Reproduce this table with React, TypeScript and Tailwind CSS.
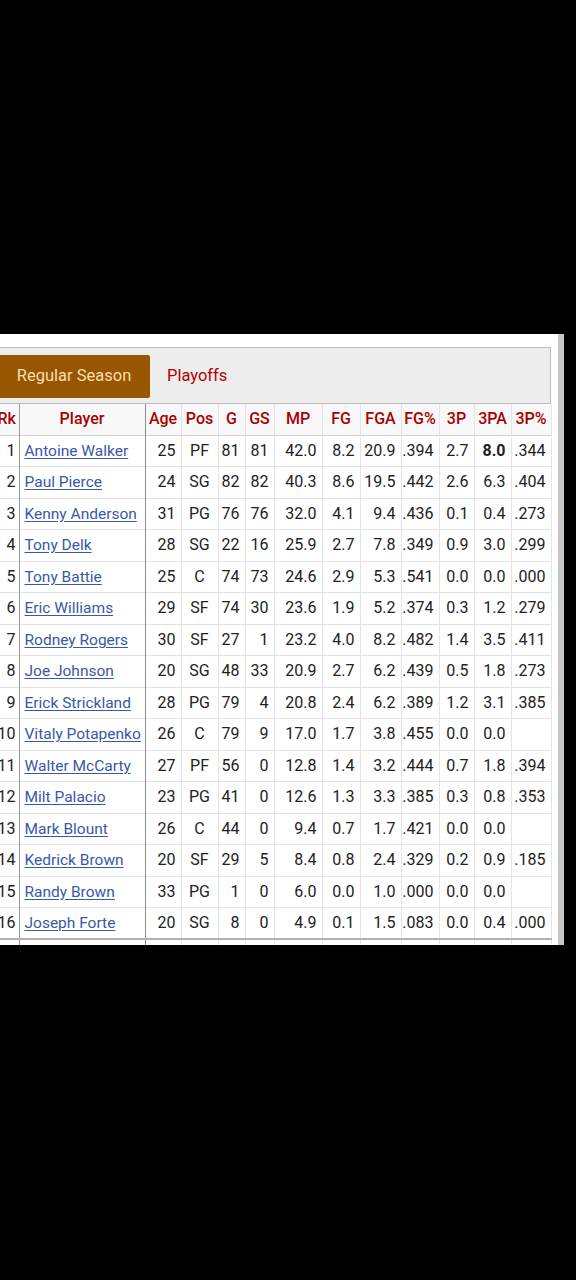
const cols = [
  { key: 'rk', label: 'Rk', w: 24 },
  { key: 'player', label: 'Player', w: 126 },
  { key: 'age', label: 'Age', w: 36 },
  { key: 'pos', label: 'Pos', w: 37 },
  { key: 'g', label: 'G', w: 27 },
  { key: 'gs', label: 'GS', w: 29 },
  { key: 'mp', label: 'MP', w: 48 },
  { key: 'fg', label: 'FG', w: 38 },
  { key: 'fga', label: 'FGA', w: 41 },
  { key: 'fgp', label: 'FG%', w: 38 },
  { key: 'tp', label: '3P', w: 35 },
  { key: 'tpa', label: '3PA', w: 37 },
  { key: 'tpp', label: '3P%', w: 40 },
]

// rk, player, age, pos, g, gs, mp, fg, fga, fg%, 3p, 3pa, 3p%
const rows: string[][] = [
  ['1', 'Antoine Walker', '25', 'PF', '81', '81', '42.0', '8.2', '20.9', '.394', '2.7', '8.0', '.344'],
  ['2', 'Paul Pierce', '24', 'SG', '82', '82', '40.3', '8.6', '19.5', '.442', '2.6', '6.3', '.404'],
  ['3', 'Kenny Anderson', '31', 'PG', '76', '76', '32.0', '4.1', '9.4', '.436', '0.1', '0.4', '.273'],
  ['4', 'Tony Delk', '28', 'SG', '22', '16', '25.9', '2.7', '7.8', '.349', '0.9', '3.0', '.299'],
  ['5', 'Tony Battie', '25', 'C', '74', '73', '24.6', '2.9', '5.3', '.541', '0.0', '0.0', '.000'],
  ['6', 'Eric Williams', '29', 'SF', '74', '30', '23.6', '1.9', '5.2', '.374', '0.3', '1.2', '.279'],
  ['7', 'Rodney Rogers', '30', 'SF', '27', '1', '23.2', '4.0', '8.2', '.482', '1.4', '3.5', '.411'],
  ['8', 'Joe Johnson', '20', 'SG', '48', '33', '20.9', '2.7', '6.2', '.439', '0.5', '1.8', '.273'],
  ['9', 'Erick Strickland', '28', 'PG', '79', '4', '20.8', '2.4', '6.2', '.389', '1.2', '3.1', '.385'],
  ['10', 'Vitaly Potapenko', '26', 'C', '79', '9', '17.0', '1.7', '3.8', '.455', '0.0', '0.0', ''],
  ['11', 'Walter McCarty', '27', 'PF', '56', '0', '12.8', '1.4', '3.2', '.444', '0.7', '1.8', '.394'],
  ['12', 'Milt Palacio', '23', 'PG', '41', '0', '12.6', '1.3', '3.3', '.385', '0.3', '0.8', '.353'],
  ['13', 'Mark Blount', '26', 'C', '44', '0', '9.4', '0.7', '1.7', '.421', '0.0', '0.0', ''],
  ['14', 'Kedrick Brown', '20', 'SF', '29', '5', '8.4', '0.8', '2.4', '.329', '0.2', '0.9', '.185'],
  ['15', 'Randy Brown', '33', 'PG', '1', '0', '6.0', '0.0', '1.0', '.000', '0.0', '0.0', ''],
  ['16', 'Joseph Forte', '20', 'SG', '8', '0', '4.9', '0.1', '1.5', '.083', '0.0', '0.4', '.000'],
]

function cellClass(i: number) {
  if (i === 0) return 'text-right pr-[3px] border-r border-r-[#9a9a9a]'
  if (i === 1) return 'text-left pl-[5px] border-r border-r-[#8c8c8c]'
  if (i === 3) return 'text-center border-r border-r-[#e4e4e4]'
  return 'text-right pr-[5px] border-r border-r-[#e4e4e4]'
}

export default function App() {
  return (
    <div className="w-[576px] min-h-[1280px] bg-black pt-[334px]" style={{ fontFamily: 'Roboto, "Noto Sans", sans-serif' }}>
      <div className="flex">
        <div className="w-[558px] h-[611px] bg-white overflow-hidden pt-[13px]">
          <div className="-ml-[3px] w-[554px] h-[57px] bg-[#ededed] border border-[#bdbdbd] pt-[7px] flex items-start">
            <div className="h-[43px] w-[152px] rounded-[2px] bg-[#985600] text-[#f7dfb0] text-[16.5px] flex items-center justify-center">
              Regular Season
            </div>
            <div className="h-[43px] flex items-center pl-[17px] text-[16.5px] text-[#b30000]">Playoffs</div>
          </div>
          <table className="-ml-[5px] table-fixed border-collapse text-[16px] text-[#222]" style={{ width: 556 }}>
            <colgroup>
              {cols.map((c) => (
                <col key={c.key} style={{ width: c.w }} />
              ))}
            </colgroup>
            <thead>
              <tr className="h-[31px] bg-[#f8f8f8] border-b border-b-[#cfcfcf]">
                {cols.map((c, i) => (
                  <th
                    key={c.key}
                    className={`p-0 text-center font-medium text-[#a80000] whitespace-nowrap border-r ${
                      i === 0 ? 'border-r-[#9a9a9a]' : i === 1 ? 'border-r-[#8c8c8c]' : 'border-r-[#e4e4e4]'
                    }`}
                  >
                    {c.label}
                  </th>
                ))}
              </tr>
            </thead>
            <tbody>
              {rows.map((r) => (
                <tr key={r[0]} className="h-[31.5px] border-b border-b-[#e2e2e2]">
                  {r.map((v, i) => (
                    <td key={i} className={`p-0 whitespace-nowrap ${cellClass(i)} ${i === 11 && v === '8.0' ? 'font-bold' : ''}`}>
                      {i === 1 ? (
                        <a href="#" className="text-[15.5px] text-[#3a58a8] underline underline-offset-2">
                          {v}
                        </a>
                      ) : (
                        v
                      )}
                    </td>
                  ))}
                </tr>
              ))}
              <tr className="h-[31px] border-t-2 border-t-[#b0b0b0]">
                {cols.map((c, i) => (
                  <td key={c.key} className={`p-0 ${cellClass(i)}`}></td>
                ))}
              </tr>
            </tbody>
          </table>
        </div>
        <div className="w-[6px] h-[611px] bg-[#c6c6c6]"></div>
      </div>
    </div>
  )
}
